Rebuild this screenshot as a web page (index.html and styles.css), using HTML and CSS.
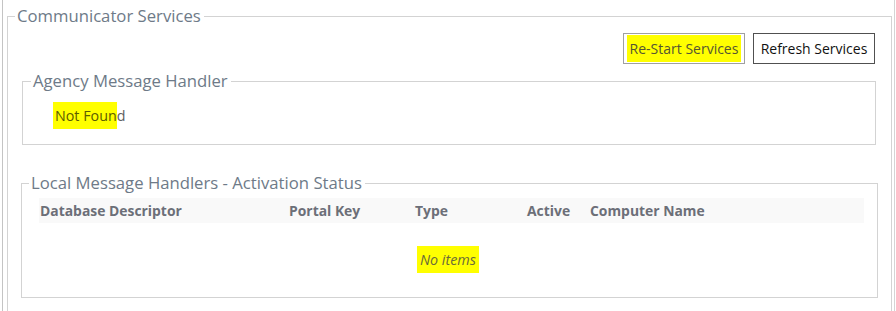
FILE: index.html
```html
<!DOCTYPE html>
<html>
<head>
<meta charset="utf-8">
<link rel="stylesheet" href="styles.css">
</head>
<body>
<div class="frame">
  <fieldset class="group outer">
    <legend class="caption">Communicator Services</legend>
    <div class="actions">
      <button class="btn btn-restart"><span class="hl">Re-Start Services</span></button>
      <button class="btn btn-refresh">Refresh Services</button>
    </div>
    <fieldset class="group agency">
      <legend class="caption">Agency Message Handler</legend>
      <div class="status"><span class="hl">Not Foun</span>d</div>
    </fieldset>
    <fieldset class="group local">
      <legend class="caption">Local Message Handlers - Activation Status</legend>
      <div class="grid-head">
        <span class="col c-desc">Database Descriptor</span>
        <span class="col c-key">Portal Key</span>
        <span class="col c-type">Type</span>
        <span class="col c-active">Active</span>
        <span class="col c-comp">Computer Name</span>
      </div>
      <div class="empty"><span class="hl hl-empty">No items</span></div>
    </fieldset>
  </fieldset>
</div>
</body>
</html>
```
FILE: styles.css
```css
html, body {
  margin: 0;
  padding: 0;
  background: #fff;
}
body {
  font-family: "Open Sans", "Noto Sans", sans-serif;
  width: 896px;
  height: 311px;
  overflow: hidden;
}
.frame {
  margin-left: 2px;
  width: 893px;
  height: 311px;
  box-sizing: border-box;
  border-left: 1px solid #c4c4c4;
  border-right: 1px solid #d4d4d4;
  padding: 5px 2px 0 4px;
  overflow: hidden;
}
.group {
  margin: 0;
  padding: 0;
  border: 1px solid #d3d3d3;
  min-width: 0;
}
.caption {
  color: #6e7a88;
  font-size: 16.7px;
  line-height: 22px;
  padding: 0 3px 0 2px;
}
.outer {
  height: 340px;
}
.outer > .caption {
  margin-left: 7px;
}
.actions {
  display: flex;
  justify-content: flex-end;
  gap: 8px;
  margin-top: 6px;
  margin-right: 16px;
}
.btn {
  font-family: inherit;
  font-size: 14px;
  height: 31px;
  width: 122px;
  padding: 0;
  background: #fff;
  border: 1px solid #999;
  border-radius: 0;
  color: #222;
}
.btn-restart {
  border-color: #a0a0a0;
}
.btn-restart .hl {
  color: #555533;
  padding: 4px 3px;
}
.btn-refresh {
  border-color: #505050;
  color: #111;
}
.hl {
  background: #ffff00;
  padding: 3px 2px;
}
.agency {
  margin: 6px 0 0 14px;
  height: 75px;
  box-sizing: border-box;
  width: 854px;
}
.agency > .caption {
  margin-left: 8px;
}
.status {
  margin-top: 14px;
  padding-left: 32px;
  font-size: 14.3px;
  color: #606060;
}
.status .hl {
  color: #5c5c00;
  padding: 4px 0 4px 2px;
  margin-left: -2px;
}
.local {
  margin: 27px 0 0 13px;
  height: 126px;
  box-sizing: border-box;
  width: 857px;
}
.local > .caption {
  margin-left: 7px;
}
.grid-head {
  display: flex;
  align-items: center;
  height: 25px;
  margin: 4px 0 0 17px;
  width: 825px;
  background: #f9f9f9;
  font-size: 13.9px;
  font-weight: 700;
  color: #6c6f78;
}
.col {
  flex: none;
}
.c-desc { width: 249px; padding-left: 1px; }
.c-key { width: 126px; }
.c-type { width: 112px; }
.c-active { width: 63px; }
.empty {
  margin-top: 27px;
  padding-left: 395px;
  font-size: 14.3px;
  font-style: italic;
  color: #6a6a3a;
}
.hl-empty {
  padding: 4px 3px;
}
```
